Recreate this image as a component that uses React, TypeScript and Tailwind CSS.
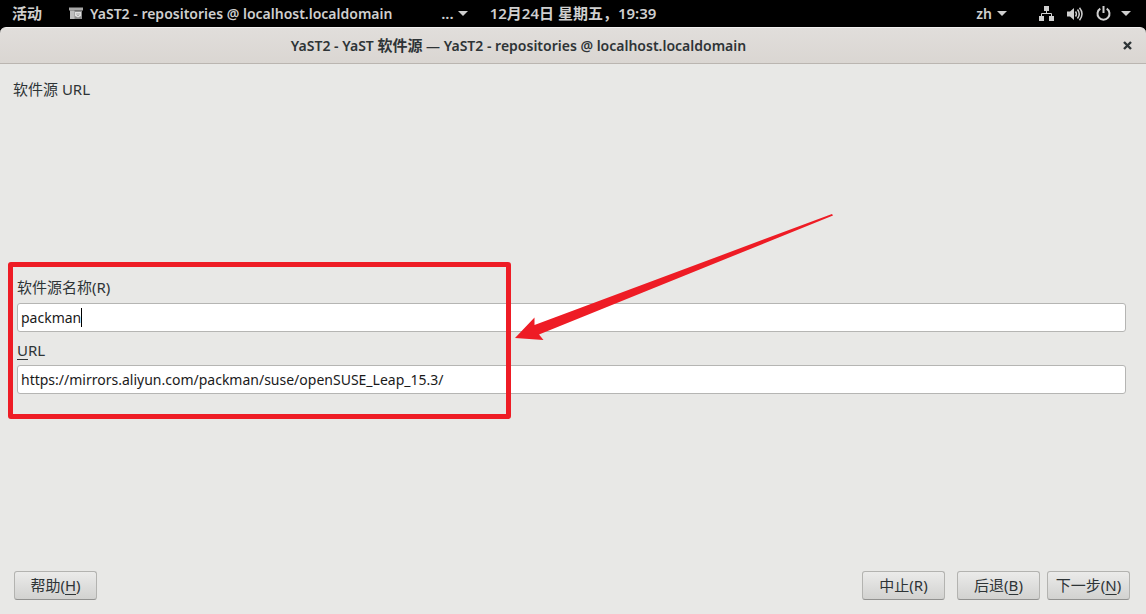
import type { ReactNode } from "react";

//Small triangle used next to the panel menus
const Caret = () => (
  <svg width="10" height="5" viewBox="0 0 10 5" fill="currentColor">
    <path d="M0 0h10L5 5z" />
  </svg>
);

const TopBar = () => {
  return (
    <header className="grid h-[27px] grid-cols-[1fr_auto_1fr] items-center bg-black px-3 text-[15px] font-semibold text-[#cfcfcf]">
      <div className="flex h-[27px] items-center justify-between pr-[22px]">
        <div className="flex items-center gap-[27px]">
          <button>活动</button>
          <button className="flex items-center gap-[7px] text-sm">
            <svg width="14" height="13" viewBox="0 0 14 13">
              <path d="M0 0.500h14v3H0z" fill="#a8a8a8" />
              <path d="M1 3.500h12v8.500H1z" fill="#8c8c8c" />
              <path d="M1 3.500h4.500v8.500H1z" fill="#bdbdbd" />
              <path d="M6 5h6v4l-3 1.500L6 9z" fill="#e0e0e0" />
              <path d="M7.500 7h1M9.500 7h1M8.500 8.500h1" stroke="#777" />
            </svg>
            YaST2 - repositories @ localhost.localdomain
          </button>
        </div>
        <button className="flex items-center gap-1" aria-label="更多">
          ... <Caret />
        </button>
      </div>
      <time>12月24日 星期五，19:39</time>
      <div className="flex items-center justify-end gap-8 pr-[3px]">
        <button className="flex items-center gap-[5px] text-sm">
          zh <Caret />
        </button>
        <button className="flex items-center gap-[10px]" aria-label="系统">
          <span className="flex items-center gap-[13px]">
            <svg width="15" height="15" viewBox="0 0 15 15" fill="currentColor">
              <path d="M5 0h5v5H5zM0 10h5v5H0zM10 10h5v5h-5z" />
              <path d="M7.500 5v2.500M2.500 10V7.500h10V10" fill="none" stroke="currentColor" />
            </svg>
            <svg width="16" height="14" viewBox="0 0 16 14" fill="currentColor">
              <path d="M0 4.500h3L7 1v12L3 9.500H0z" />
              <path
                d="M8.500 4.500q1.800 2.500 0 5M10.500 2.500q3.500 4.500 0 9M12.500 .8q5 6.200 0 12.400"
                fill="none"
                stroke="currentColor"
                strokeWidth="1.500"
              />
            </svg>
            <svg
              width="15"
              height="15"
              viewBox="0 0 15 15"
              fill="none"
              stroke="currentColor"
              strokeWidth="2"
            >
              <path d="M4.300 2.600a6 6 0 1 0 6.400 0M7.500 0v7" />
            </svg>
          </span>
          <Caret />
        </button>
      </div>
    </header>
  );
};

const TitleBar = () => {
  return (
    <div className="bg-black">
      <div className="flex h-[37px] items-center rounded-t-md border-t border-b border-t-[#f3f1f0] border-b-[#bab5b0] bg-linear-to-b from-[#e1dedb] to-[#dad6d2] px-3">
        <h1 className="flex-1 pr-24 text-center text-sm font-semibold">
          YaST2 - YaST <span className="text-[15px]">软件源</span> — YaST2 - repositories @
          localhost.localdomain
        </h1>
        <button className="px-[2px]" aria-label="关闭">
          <svg width="9" height="9" viewBox="0 0 9 9" stroke="#2e3436" strokeWidth="2.400">
            <path d="M1 1l7 7M8 1l-7 7" />
          </svg>
        </button>
      </div>
    </div>
  );
};

const DialogButton = ({ children }: { children: ReactNode }) => (
  <button className="h-[29px] w-[83px] rounded-[3px] border border-[#b3b3b0] border-b-[#929290] bg-linear-to-b from-[#ebebea] to-[#d2d2d0] text-[15px] whitespace-nowrap">
    {children}
  </button>
);

const Key = ({ children }: { children: ReactNode }) => (
  <span className="underline underline-offset-3">{children}</span>
);

const inputClass =
  "block h-[29px] w-full rounded-[3px] border border-[#b5b5b3] bg-white px-[3px] text-sm text-[#1a1a1a] caret-transparent outline-none";

//Red box and arrow that point out the two fields
const Annotation = () => (
  <>
    <div className="pointer-events-none absolute -top-[14px] left-2 h-[157px] w-[503px] rounded-[3px] border-5 border-[#ee1c25]" />
    <svg
      className="pointer-events-none absolute -top-[62px] left-[515px]"
      width="318"
      height="126"
      viewBox="0 0 318 126"
      fill="#ee1c25"
    >
      <path d="M0 124 19.500 103.500V111L317 0 318 1.500 24 120.500 28.500 126z" />
    </svg>
  </>
);

const App = () => {
  return (
    <div className="flex min-h-screen flex-col bg-[#e8e8e6] font-['Noto_Sans','Noto_Sans_CJK_SC',sans-serif] text-[#2e3436]">
      <TopBar />
      <TitleBar />
      <main className="flex flex-1 flex-col pb-[14px]">
        <h2 className="px-[13px] pt-[13px] text-[15px] leading-6">软件源 URL</h2>
        <form className="relative my-auto pr-5 pb-[3px] pl-[17px]">
          <label htmlFor="name" className="block h-[27px] text-[15px] leading-[22px]">
            软件源名称(R)
          </label>
          <div className="relative">
            <input id="name" className={inputClass} defaultValue="packman" />
            <span className="absolute top-[5px] left-16 h-[19px] w-px bg-black" />
          </div>
          <label htmlFor="url" className="mt-[7px] block h-[26px] text-[15px] leading-[22px]">
            <Key>U</Key>RL
          </label>
          <input
            id="url"
            className={inputClass}
            defaultValue="https://mirrors.aliyun.com/packman/suse/openSUSE_Leap_15.3/"
          />
          <Annotation />
        </form>
        <footer className="flex justify-between pr-4 pl-[14px]">
          <DialogButton>
            帮助(<Key>H</Key>)
          </DialogButton>
          <div className="flex">
            <DialogButton>中止(R)</DialogButton>
            <div className="mr-[7px] ml-3">
              <DialogButton>
                后退(<Key>B</Key>)
              </DialogButton>
            </div>
            <DialogButton>
              下一步(<Key>N</Key>)
            </DialogButton>
          </div>
        </footer>
      </main>
    </div>
  );
};

export default App;
